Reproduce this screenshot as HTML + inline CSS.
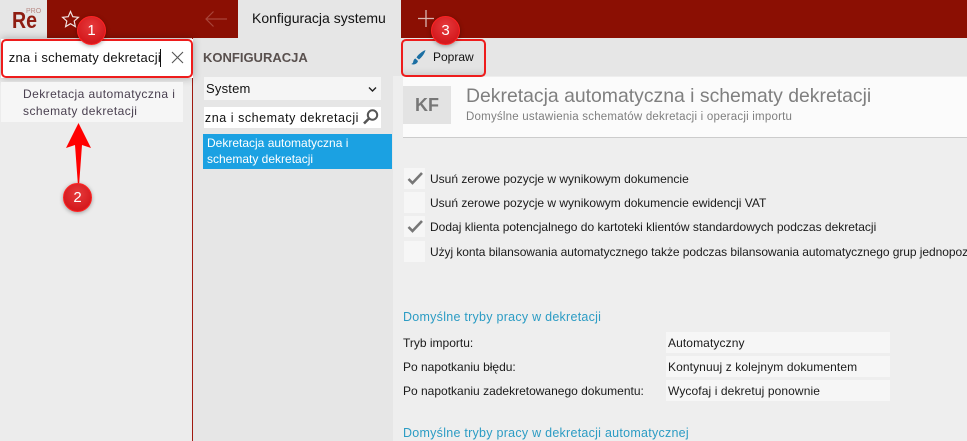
<!DOCTYPE html>
<html lang="pl"><head><meta charset="utf-8"><title>Konfiguracja systemu</title>
<style>
*{box-sizing:border-box}
html,body{margin:0;padding:0}
body{width:967px;height:441px;overflow:hidden;position:relative;background:#eee;font-family:"Liberation Sans",sans-serif;color:#111}
.a{position:absolute;white-space:nowrap}
.t{position:absolute;white-space:nowrap;font-size:12px;line-height:16px;color:#1a1a1a}
.h{position:absolute;white-space:nowrap;font-size:12.5px;line-height:16px;color:#2c9cc4;letter-spacing:.26px;left:403px}
.cb{position:absolute;left:404px;width:21px;height:21px;background:#f6f6f6}
.v{position:absolute;left:666px;width:224px;height:21px;background:#f6f6f6}
.badge{position:absolute;width:29px;height:29px;border-radius:50%;background:radial-gradient(circle at 50% 35%,#e63a3c,#d51a1e 70%);border:1px solid #f22;box-shadow:0 1px 4px rgba(0,0,0,.35);color:#fff;font-size:15px;line-height:27px;text-align:center}
.box{position:absolute;border:2px solid #ee1c1c;border-radius:5px}
</style></head><body>
<div class="a" style="left:0;top:0;width:967px;height:38px;background:#8b0f03"></div>
<div class="a" style="left:0;top:0;width:47px;height:38px;background:#e6e6e6"></div>
<div class="a" style="left:12px;top:6px;font-size:23px;line-height:28px;font-weight:bold;color:#8f1d12;transform:scaleX(.85);transform-origin:left top">Re</div>
<div class="a" style="left:26px;top:9px;font-size:7px;line-height:6px;color:#b88a85">PRO</div>
<svg class="a" style="left:61px;top:10px" width="19" height="19" viewBox="0 0 19 19"><path d="M9.5 1.5l2.3 5.2 5.6.6-4.2 3.8 1.2 5.5-4.9-2.9-4.9 2.9 1.2-5.5L1.600 7.300l5.600-.6z" fill="none" stroke="#f1e4e2" stroke-width="1.200"/></svg>
<svg class="a" style="left:204px;top:10px" width="24" height="18" viewBox="0 0 24 18"><path d="M23 9H2M9.500 1.500L2 9l7.500 7.500" fill="none" stroke="#a9453a" stroke-width="1.200"/></svg>
<div class="a" style="left:238px;top:0;width:163px;height:38px;background:#e6e6e6"></div>
<div class="a" style="left:252px;top:9px;font-size:14px;line-height:18px;color:#111">Konfiguracja systemu</div>
<svg class="a" style="left:418px;top:10px" width="16" height="17" viewBox="0 0 16 17"><path d="M8 0v17M0 8.500h16" stroke="#d8b5b0" stroke-width="1.300"/></svg>

<div class="a" style="left:0;top:38px;width:192px;height:403px;background:#ececec"></div>
<div class="a" style="left:192px;top:38px;width:1px;height:403px;background:#a01a10"></div>
<div class="a" style="left:193px;top:38px;width:200px;height:403px;background:#e6e6e6"></div>
<div class="a" style="left:393px;top:38px;width:574px;height:38px;background:#e6e6e6"></div>

<div class="a" style="left:1px;top:39px;width:192px;height:39px;background:#fff;box-shadow:0 0 8px rgba(0,0,0,.3)"></div>
<div class="a" style="left:3px;top:40px;width:189px;height:37px;overflow:hidden"><div class="a" style="right:31px;top:9px;font-size:13px;line-height:18px;color:#111;letter-spacing:.25px">zna i schematy dekretacji</div></div>
<div class="a" style="left:160px;top:49px;width:1px;height:18px;background:#111"></div>
<svg class="a" style="left:171px;top:51px" width="13" height="13" viewBox="0 0 13 13"><path d="M1 1l11 11M12 1L1 12" stroke="#555" stroke-width="1.100"/></svg>
<div class="box" style="left:1px;top:39px;width:192px;height:39px"></div>
<div class="a" style="left:1px;top:82px;width:182px;height:40px;background:#f6f6f6"></div>
<div class="t" style="left:23px;top:86px;color:#4a4050;line-height:17px;letter-spacing:.44px">Dekretacja automatyczna i<br>schematy dekretacji</div>
<svg class="a" style="left:66px;top:122px" width="26" height="66" viewBox="0 0 26 66"><path d="M12.500 1L25 26l-9-3-3 41h-1L9 23l-9 3z" fill="#f00"/></svg>

<div class="a" style="left:203px;top:50px;font-size:13px;line-height:16px;font-weight:bold;color:#59504e">KONFIGURACJA</div>
<div class="a" style="left:204px;top:77px;width:177px;height:23px;background:#f5f5f5"></div>
<div class="a" style="left:206px;top:80px;font-size:13px;line-height:18px;color:#111;letter-spacing:.2px">System</div>
<svg class="a" style="left:368px;top:86px" width="9" height="7" viewBox="0 0 9 7"><path d="M1 1.500l3.500 3.500L8 1.500" fill="none" stroke="#222" stroke-width="1.400"/></svg>
<div class="a" style="left:204px;top:107px;width:177px;height:21px;background:#fff;overflow:hidden"><div class="a" style="right:22px;top:2px;font-size:12.500px;line-height:18px;color:#111;letter-spacing:.55px">Dekretacja automatyczna i schematy dekretacji</div></div>
<svg class="a" style="left:362px;top:108px" width="18" height="18" viewBox="0 0 18 18"><circle cx="10.500" cy="7" r="4.700" fill="none" stroke="#555" stroke-width="2"/><path d="M7 10.500l-5 5" stroke="#555" stroke-width="2.600"/></svg>
<div class="a" style="left:203px;top:134px;width:189px;height:35px;background:#1ba1e2"></div>
<div class="t" style="left:207px;top:135px;color:#fff;line-height:16px">Dekretacja automatyczna i<br>schematy dekretacji</div>

<div class="a" style="left:402px;top:40px;width:83px;height:36px;background:#e4e4e4;box-shadow:inset 0 -6px 8px -4px rgba(0,0,0,.14)"></div>
<div class="box" style="left:401px;top:39px;width:85px;height:38px"></div>
<svg class="a" style="left:410px;top:49px" width="17" height="17" viewBox="0 0 17 17"><path d="M15.500 1C12 2.500 8 5.500 6.500 8.500L9 10.500C11.500 8.500 14.500 5 15.500 1z" fill="#1c6fa3"/><path d="M5.500 9.500C3.500 10 3.500 12 3 13.500 2.700 14.300 2 14.700 1.200 15 3.500 16 7 15.500 8 12z" fill="#1c6fa3"/></svg>
<div class="a" style="left:433px;top:49px;font-size:12px;line-height:16px;color:#111">Popraw</div>

<div class="a" style="left:403px;top:77px;width:564px;height:61px;background:#fbfbfb;border-bottom:1px solid #ccc"></div>
<div class="a" style="left:403px;top:86px;width:48px;height:38px;background:#e3e3e3;color:#777;font-size:18px;font-weight:bold;text-align:center;line-height:38px">KF</div>
<div class="a" style="left:466px;top:83px;font-size:19.400px;line-height:26px;color:#7f7f7f">Dekretacja automatyczna i schematy dekretacji</div>
<div class="a" style="left:466px;top:110px;font-size:11.500px;line-height:14px;color:#7f7f7f;letter-spacing:.22px">Domyślne ustawienia schematów dekretacji i operacji importu</div>

<div class="cb" style="top:168px"></div>
<svg class="a" style="left:407px;top:171px" width="16" height="15" viewBox="0 0 16 15"><path d="M1.500 8l4 4L15 2" fill="none" stroke="#777" stroke-width="2.600"/></svg>
<div class="t" style="left:430px;top:171px">Usuń zerowe pozycje w wynikowym dokumencie</div>
<div class="cb" style="top:192px"></div>
<div class="t" style="left:430px;top:195px">Usuń zerowe pozycje w wynikowym dokumencie ewidencji VAT</div>
<div class="cb" style="top:216px"></div>
<svg class="a" style="left:407px;top:219px" width="16" height="15" viewBox="0 0 16 15"><path d="M1.500 8l4 4L15 2" fill="none" stroke="#777" stroke-width="2.600"/></svg>
<div class="t" style="left:430px;top:219px">Dodaj klienta potencjalnego do kartoteki klientów standardowych podczas dekretacji</div>
<div class="cb" style="top:241px"></div>
<div class="t" style="left:430px;top:244px;letter-spacing:-.06px">Użyj konta bilansowania automatycznego także podczas bilansowania automatycznego grup jednopoz</div>

<div class="h" style="top:309px">Domyślne tryby pracy w dekretacji</div>
<div class="t" style="left:403px;top:335px">Tryb importu:</div>
<div class="v" style="top:332px"></div><div class="t" style="left:668px;top:335px;letter-spacing:.1px">Automatyczny</div>
<div class="t" style="left:403px;top:359px">Po napotkaniu błędu:</div>
<div class="v" style="top:356px"></div><div class="t" style="left:668px;top:359px;letter-spacing:.1px">Kontynuuj z kolejnym dokumentem</div>
<div class="t" style="left:403px;top:383px">Po napotkaniu zadekretowanego dokumentu:</div>
<div class="v" style="top:380px"></div><div class="t" style="left:668px;top:383px;letter-spacing:.1px">Wycofaj i dekretuj ponownie</div>
<div class="h" style="top:425px">Domyślne tryby pracy w dekretacji automatycznej</div>

<div class="badge" style="left:77px;top:16px">1</div>
<div class="badge" style="left:63px;top:183px">2</div>
<div class="badge" style="left:431px;top:16px">3</div>
</body></html>
